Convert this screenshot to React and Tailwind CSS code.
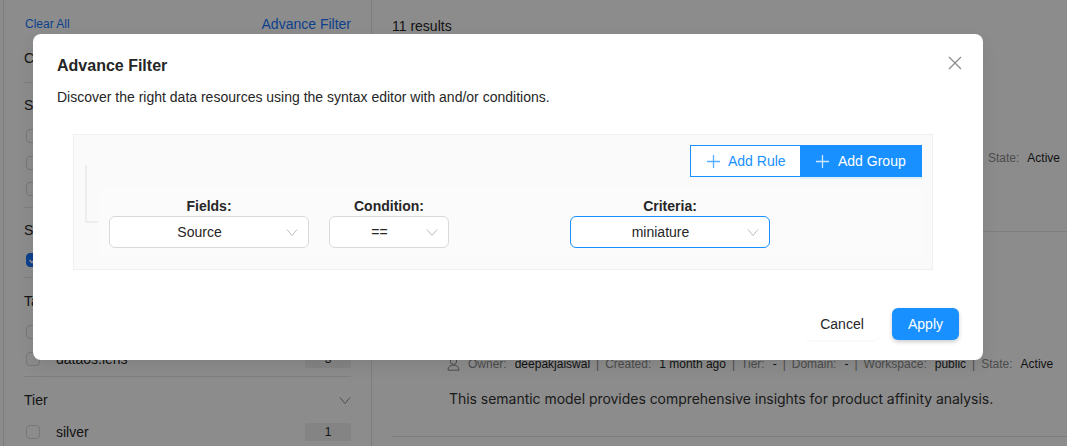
import React from "react";

const Check = ({ checked }) => (
  <span
    className={`flex h-[14px] w-[14px] shrink-0 items-center justify-center rounded-[4px] border ${
      checked ? "border-[#1677ff] bg-[#1677ff]" : "border-[#d9d9d9] bg-white"
    }`}
  >
    {checked && (
      <svg width="10" height="10" viewBox="0 0 10 10" fill="none" stroke="#fff" strokeWidth="1.6">
        <path d="M1.5 5.2 L4 7.6 L8.5 2.4" />
      </svg>
    )}
  </span>
);

const Chevron = ({ className = "", color = "#bfbfbf", size = 12 }) => (
  <svg width={size} height={size} viewBox="0 0 12 12" fill="none" stroke={color} strokeWidth="1" className={className}>
    <path d="M1 3.5 L6 9.5 L11 3.5" />
  </svg>
);

const Plus = ({ color }) => (
  <svg width="13" height="13" viewBox="0 0 13 13" fill="none" stroke={color} strokeWidth="1.3">
    <path d="M6.5 0 V13 M0 6.5 H13" />
  </svg>
);

const FilterRow = ({ label, count, checked }) => (
  <div className="flex h-[26.5px] items-center text-sm text-[#262626]">
    <div className="ml-[2px] w-[30px]">
      <Check checked={checked} />
    </div>
    <span className="flex-1">{label}</span>
    {count && (
      <span className="flex h-[18px] w-[46px] items-center justify-center rounded-[2px] bg-[#f0f0f0] text-xs">
        {count}
      </span>
    )}
  </div>
);

const Section = ({ title, children, divider = true, className = "" }) => (
  <div className={`${divider ? "border-b border-[#e5e5e5]" : ""} ${className}`}>
    <div className="flex h-5 items-center justify-between text-sm text-[#262626]">
      {title}
      <Chevron color="#8c8c8c" />
    </div>
    {children}
  </div>
);

const Meta = ({ label, value }) => (
  <span className="flex gap-2 whitespace-nowrap">
    <span className="text-[#8c8c8c]">{label}</span>
    <span className="text-[#1f1f1f]">{value}</span>
  </span>
);

const Sep = () => <span className="text-[#8c8c8c]">|</span>;

const Select = ({ label, value, width, active }) => (
  <div className={`flex shrink-0 flex-col ${width}`}>
    <div className="h-[29px] pt-[11px] text-center text-sm leading-4 font-bold text-[#262626]">{label}</div>
    <div
      className={`flex h-8 items-center rounded-md border bg-white pr-[10px] text-sm text-[#262626] ${
        active ? "border-[#1890ff]" : "border-[#d9d9d9]"
      }`}
    >
      <span className="flex-1 pl-[3px] text-center">{value}</span>
      <Chevron />
    </div>
  </div>
);

export default function App() {
  return (
    <div className="relative h-[446px] w-[1067px] overflow-hidden bg-white font-['Liberation_Sans',sans-serif]">
      {/* page behind the modal */}
      <div className="flex h-full">
        <aside className="ml-[3px] h-full w-[369px] shrink-0 border-x border-[#e5e5e5] pt-[14px] pr-5 pl-5">
          <div className="flex h-5 items-center justify-between">
            <span className="pl-[1px] text-xs text-[#1677ff]">Clear All</span>
            <span className="text-sm text-[#1677ff]">Advance Filter</span>
          </div>
          <Section title="Catalog" className="mt-[14px] h-[35px]" />
          <Section title="Source" className="mt-[12px] h-[113px]">
            <div className="mt-[8px]">
              <FilterRow label="lens" count="2" />
              <FilterRow label="depot" count="3" />
              <FilterRow label="data product" count="6" />
            </div>
          </Section>
          <Section title="State" className="mt-[12px] h-[58px]">
            <div className="mt-[7px]">
              <FilterRow label="Active" count="11" checked />
            </div>
          </Section>
          <Section title="Tags" className="mt-[13px] h-[86px]">
            <div className="mt-[8px]">
              <FilterRow label="dataos.lens" count="5" />
              <FilterRow label="dataos.lens" count="3" />
            </div>
          </Section>
          <Section title="Tier" divider={false} className="mt-[13px]">
            <div className="mt-[9px]">
              <FilterRow label="silver" count="1" />
            </div>
          </Section>
        </aside>

        <main className="min-w-0 flex-1 pt-[16px] pl-5 text-[#262626]">
          <div className="text-sm">11 results</div>
          <div className="mt-[114px] flex h-[82px] justify-end border-b border-[#e5e5e5] pr-[7px] text-xs">
            <Meta label="State:" value="Active" />
          </div>
          <div className="mt-[124px] flex h-[81px] flex-col border-b border-[#e5e5e5]">
            <div className="flex items-center gap-2 pl-[55px] text-xs">
              <svg width="13" height="14" viewBox="0 0 13 14" fill="none" stroke="#8c8c8c" strokeWidth="1" className="shrink-0">
                <circle cx="6.5" cy="4.2" r="3.2" />
                <path d="M1 13.2 C1 9.8 3 8.2 6.5 8.2 S12 9.8 12 13.2 Z" />
              </svg>
              <div className="flex gap-[6px]">
                <Meta label="Owner:" value="deepakjaiswal" />
                <Sep />
                <Meta label="Created:" value="1 month ago" />
                <Sep />
                <Meta label="Tier:" value="-" />
                <Sep />
                <Meta label="Domain:" value="-" />
                <Sep />
                <Meta label="Workspace:" value="public" />
                <Sep />
                <Meta label="State:" value="Active" />
              </div>
            </div>
            <p className="mt-[17px] pl-[57px] font-['Inter',sans-serif] text-sm tracking-[-0.035px] text-[#333333]">
              This semantic model provides comprehensive insights for product affinity analysis.
            </p>
          </div>
        </main>
      </div>

      {/* dimmed mask */}
      <div className="absolute inset-0 bg-black/45" />

      {/* modal */}
      <div className="absolute top-[34px] left-[33px] h-[326px] w-[950px] rounded-lg bg-white px-6 pt-[23px] shadow-[0_6px_16px_rgba(0,0,0,0.08)]">
        <button className="absolute top-[22px] right-[21px] text-[#8c8c8c]">
          <svg width="14" height="14" viewBox="0 0 14 14" fill="none" stroke="currentColor" strokeWidth="1.3" className="block">
            <path d="M1 1 L13 13 M13 1 L1 13" />
          </svg>
        </button>
        <h2 className="text-base leading-[18px] font-bold text-[#262626]">Advance Filter</h2>
        <p className="mt-[14px] text-sm leading-4 text-[#262626]">
          Discover the right data resources using the syntax editor with and/or conditions.
        </p>

        <div className="relative mt-[29px] ml-4 h-[136px] w-[860px] border border-[#f0f0f0] bg-[#fafafa] pt-[10px] pr-[10px]">
          {/* connector bracket */}
          <div className="absolute top-[30px] left-[11px] h-[58px] w-[13px] rounded-bl-[2px] border-b-2 border-l-2 border-[#eeeeee]" />

          <div className="flex justify-end">
            <button className="flex h-8 w-[110px] items-center gap-2 border border-r-0 border-[#1890ff] bg-white pl-[16px] text-sm text-[#1890ff]">
              <Plus color="#5aaeff" />
              Add Rule
            </button>
            <button className="flex h-8 w-[122px] items-center gap-[9px] bg-[#1890ff] pl-[16px] text-sm text-white shadow-[0_2px_0_rgba(5,145,255,0.1)]">
              <Plus color="#d1e9ff" />
              Add Group
            </button>
          </div>

          <div className="mt-[10px] ml-[24px] flex h-[71px] bg-[#fbfbfb] pl-[11px]">
            <Select label="Fields:" value="Source" width="w-[200px]" />
            <div className="w-5 shrink-0" />
            <Select label="Condition:" value="==" width="w-[120px]" />
            <div className="w-[121px] shrink-0" />
            <Select label="Criteria:" value="miniature" width="w-[200px]" active />
          </div>
        </div>

        <div className="mt-[38px] flex justify-end gap-[13px]">
          <button className="h-8 w-[74px] rounded-md bg-white text-sm text-[#262626] shadow-[0_2px_0_rgba(0,0,0,0.02)]">Cancel</button>
          <button className="h-8 w-[67px] rounded-md bg-[#1890ff] text-sm text-white shadow-[0_2px_4px_rgba(0,0,0,0.2)]">Apply</button>
        </div>
      </div>
    </div>
  );
}
